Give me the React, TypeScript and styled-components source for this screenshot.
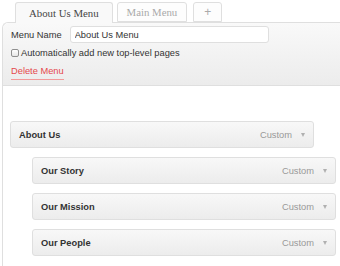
import React from 'react';
import styled, { createGlobalStyle } from 'styled-components';

const GlobalStyle = createGlobalStyle`
  body {
    margin: 0;
    background: #fff;
    font-family: 'Liberation Sans', Arial, sans-serif;
    font-size: 9.3px;
    color: #333;
  }
`;

const Page = styled.div`
  width: 340px;
  height: 266px;
  overflow: hidden;
  padding-top: 2px;
  box-sizing: border-box;
`;

const TabBar = styled.div`
  display: flex;
  align-items: flex-end;
  gap: 4px;
  padding-left: 15px;
  height: 20px;
`;

const Tab = styled.div<{ $active?: boolean; $pad: number }>`
  box-sizing: border-box;
  height: ${(p) => (p.$active ? '21px' : '20px')};
  margin-bottom: ${(p) => (p.$active ? '-1px' : '0')};
  padding: 0 ${(p) => p.$pad}px;
  display: flex;
  align-items: center;
  border: 1px solid #dfdfdf;
  border-bottom: ${(p) => (p.$active ? 'none' : '1px solid #dfdfdf')};
  border-radius: 3px 3px 0 0;
  background: ${(p) => (p.$active ? '#f9f9f9' : '#fdfdfd')};
  font-family: 'Liberation Serif', Georgia, serif;
  font-size: 10.8px;
  color: ${(p) => (p.$active ? '#464646' : '#aaa')};
  position: relative;
  z-index: 1;
`;

const PlusTab = styled(Tab)`
  margin-left: 2px;
  font-family: 'Liberation Sans', Arial, sans-serif;
  font-size: 12px;
`;

const Panel = styled.div`
  margin-left: 2px;
  border-left: 1px solid #dfdfdf;
  border-top: 1px solid #dfdfdf;
  border-radius: 6px 0 0 0;
  height: 250px;
`;

const PanelHeader = styled.div`
  height: 63px;
  box-sizing: border-box;
  padding: 3px 8px 0;
  border-bottom: 1px solid #dfdfdf;
  border-radius: 6px 0 0 0;
  background: linear-gradient(#f9f9f9, #ececec);
  display: flex;
  flex-direction: column;
`;

const NameRow = styled.label`
  display: flex;
  align-items: center;
  gap: 8px;
  color: #333;
`;

const NameInput = styled.input`
  box-sizing: border-box;
  width: 199px;
  height: 17px;
  border: 1px solid #dfdfdf;
  border-radius: 3px;
  background: #fff;
  padding: 0 4px;
  font-family: 'Liberation Sans', Arial, sans-serif;
  font-size: 9.3px;
  color: #333;
  outline: none;
`;

const CheckRow = styled.label`
  display: flex;
  align-items: center;
  gap: 2px;
  margin-top: 3px;
  height: 13px;
  color: #333;
`;

const CheckBox = styled.span`
  box-sizing: border-box;
  width: 8px;
  height: 8px;
  border: 1px solid #8f8f8f;
  border-radius: 2px;
  background: linear-gradient(#fff, #e6e6e6);
`;

const DeleteLink = styled.span`
  align-self: flex-start;
  margin-top: 7px;
  color: #e5484d;
  border-bottom: 1px solid #f29a9a;
  padding-bottom: 3px;
`;

const PanelBody = styled.div`
  padding: 35px 0 0 7px;
  display: flex;
  flex-direction: column;
  gap: 9px;
`;

const Item = styled.div<{ $depth: number }>`
  box-sizing: border-box;
  margin-left: ${(p) => p.$depth * 22}px;
  width: 304px;
  height: 27px;
  border: 1px solid #dfdfdf;
  border-radius: 3px;
  background: linear-gradient(#f8f8f8, #ececec);
  display: flex;
  align-items: center;
  padding: 0 8px 0 8px;
`;

const ItemTitle = styled.span`
  flex: 1;
  font-weight: bold;
  color: #333;
`;

const ItemType = styled.span`
  color: #999;
`;

const Arrow = styled.span`
  margin-left: 9px;
  width: 0;
  height: 0;
  border-left: 2.5px solid transparent;
  border-right: 2.5px solid transparent;
  border-top: 4px solid #b0b0b0;
`;

const items = [
  { title: 'About Us', depth: 0 },
  { title: 'Our Story', depth: 1 },
  { title: 'Our Mission', depth: 1 },
  { title: 'Our People', depth: 1 },
];

export default function App() {
  return (
    <Page>
      <GlobalStyle />
      <TabBar>
        <Tab $active $pad={13}>About Us Menu</Tab>
        <Tab $pad={9}>Main Menu</Tab>
        <PlusTab $pad={10}>+</PlusTab>
      </TabBar>
      <Panel>
        <PanelHeader>
          <NameRow>
            Menu Name
            <NameInput defaultValue="About Us Menu" />
          </NameRow>
          <CheckRow>
            <CheckBox />
            Automatically add new top-level pages
          </CheckRow>
          <DeleteLink>Delete Menu</DeleteLink>
        </PanelHeader>
        <PanelBody>
          {items.map((it) => (
            <Item key={it.title} $depth={it.depth}>
              <ItemTitle>{it.title}</ItemTitle>
              <ItemType>Custom</ItemType>
              <Arrow />
            </Item>
          ))}
        </PanelBody>
      </Panel>
    </Page>
  );
}
